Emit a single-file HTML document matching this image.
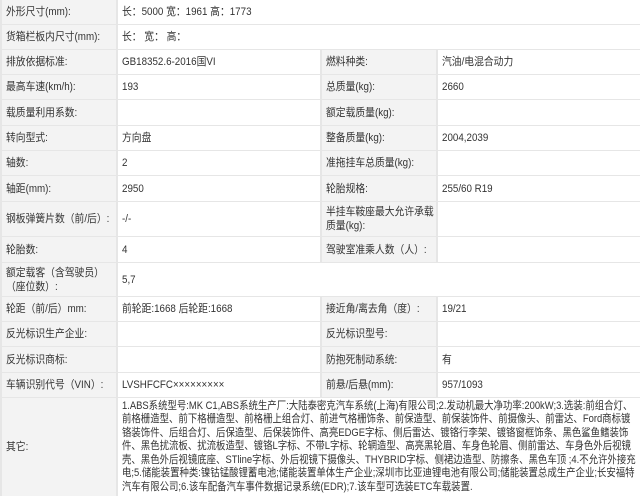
<!DOCTYPE html>
<html><head><meta charset="utf-8"><style>
body{margin:0;width:640px;height:496px;background:#e6e6e6;overflow:hidden;font-family:"Liberation Sans","Noto Sans CJK SC",sans-serif;font-size:11px;color:#333;position:relative}
.c{position:absolute;box-sizing:border-box;display:flex;align-items:center;padding-left:4px;white-space:nowrap;line-height:14px;overflow:hidden}
.c span{display:inline-block;transform:scaleX(0.89);transform-origin:left center}
.l{background:#f3f3f3}
.v{background:#fff}
.o span{transform:scaleX(0.855);font-size:11px;line-height:13.4px}
</style></head><body>
<div id="t"></div>
<script>
var rows=[
[0,24,"外形尺寸(mm):","长：5000 宽：1961 高：1773"],
[25,49,"货箱栏板内尺寸(mm):","长： 宽： 高："],
[50,74,"排放依据标准:","GB18352.6-2016国VI","燃料种类:","汽油/电混合动力"],
[75,99,"最高车速(km/h):","193","总质量(kg):","2660"],
[100,125,"载质量利用系数:","","额定载质量(kg):",""],
[126,150,"转向型式:","方向盘","整备质量(kg):","2004,2039"],
[151,175,"轴数:","2","准拖挂车总质量(kg):",""],
[176,201,"轴距(mm):","2950","轮胎规格:","255/60 R19"],
[202,236,"钢板弹簧片数（前/后）:","-/-","半挂车鞍座最大允许承载<br>质量(kg):",""],
[237,262,"轮胎数:","4","驾驶室准乘人数（人）:",""],
[263,296,"额定载客（含驾驶员）<br>（座位数）:","5,7"],
[297,321,"轮距（前/后）mm:","前轮距:1668 后轮距:1668","接近角/离去角（度）:","19/21"],
[322,346,"反光标识生产企业:","","反光标识型号:",""],
[347,372,"反光标识商标:","","防抱死制动系统:","有"],
[373,397,"车辆识别代号（VIN）:","LVSHFCFC×××××××××","前悬/后悬(mm):","957/1093"],
[398,496,"其它:","1.ABS系统型号:MK C1,ABS系统生产厂:大陆泰密克汽车系统(上海)有限公司;2.发动机最大净功率:200kW;3.选装:前组合灯、<br>前格栅造型、前下格栅造型、前格栅上组合灯、前进气格栅饰条、前保造型、前保装饰件、前摄像头、前雷达、Ford商标镀<br>铬装饰件、后组合灯、后保造型、后保装饰件、高亮EDGE字标、侧后雷达、镀铬行李架、镀铬窗框饰条、黑色鲨鱼鳍装饰<br>件、黑色扰流板、扰流板造型、镀铬L字标、不带L字标、轮辋造型、高亮黑轮眉、车身色轮眉、侧前雷达、车身色外后视镜<br>壳、黑色外后视镜底座、STline字标、外后视镜下摄像头、THYBRID字标、侧裙边造型、防擦条、黑色车顶 ;4.不允许外接充<br>电;5.储能装置种类:镍钴锰酸锂蓄电池;储能装置单体生产企业;深圳市比亚迪锂电池有限公司;储能装置总成生产企业;长安福特<br>汽车有限公司;6.该车配备汽车事件数据记录系统(EDR);7.该车型可选装ETC车载装置."]
];
var h="";
function s(x){return '<span>'+x+'</span>';}
rows.forEach(function(r){
 var t=r[0],b=r[1],hh=b-t;
 h+='<div class="c l" style="left:2px;top:'+t+'px;width:114px;height:'+hh+'px">'+s(r[2])+'</div>';
 if(r.length<5){
  var cl=r[2]=="其它:"?'c v o':'c v';
  h+='<div class="'+cl+'" style="left:118px;top:'+t+'px;width:522px;height:'+hh+'px">'+s(r[3])+'</div>';
 } else {
  h+='<div class="c v" style="left:118px;top:'+t+'px;width:202px;height:'+hh+'px">'+s(r[3])+'</div>';
  h+='<div class="c l" style="left:322px;top:'+t+'px;width:114px;height:'+hh+'px">'+s(r[4])+'</div>';
  h+='<div class="c v" style="left:438px;top:'+t+'px;width:202px;height:'+hh+'px">'+s(r[5])+'</div>';
 }
});
document.getElementById("t").innerHTML=h;
</script>
</body></html>
